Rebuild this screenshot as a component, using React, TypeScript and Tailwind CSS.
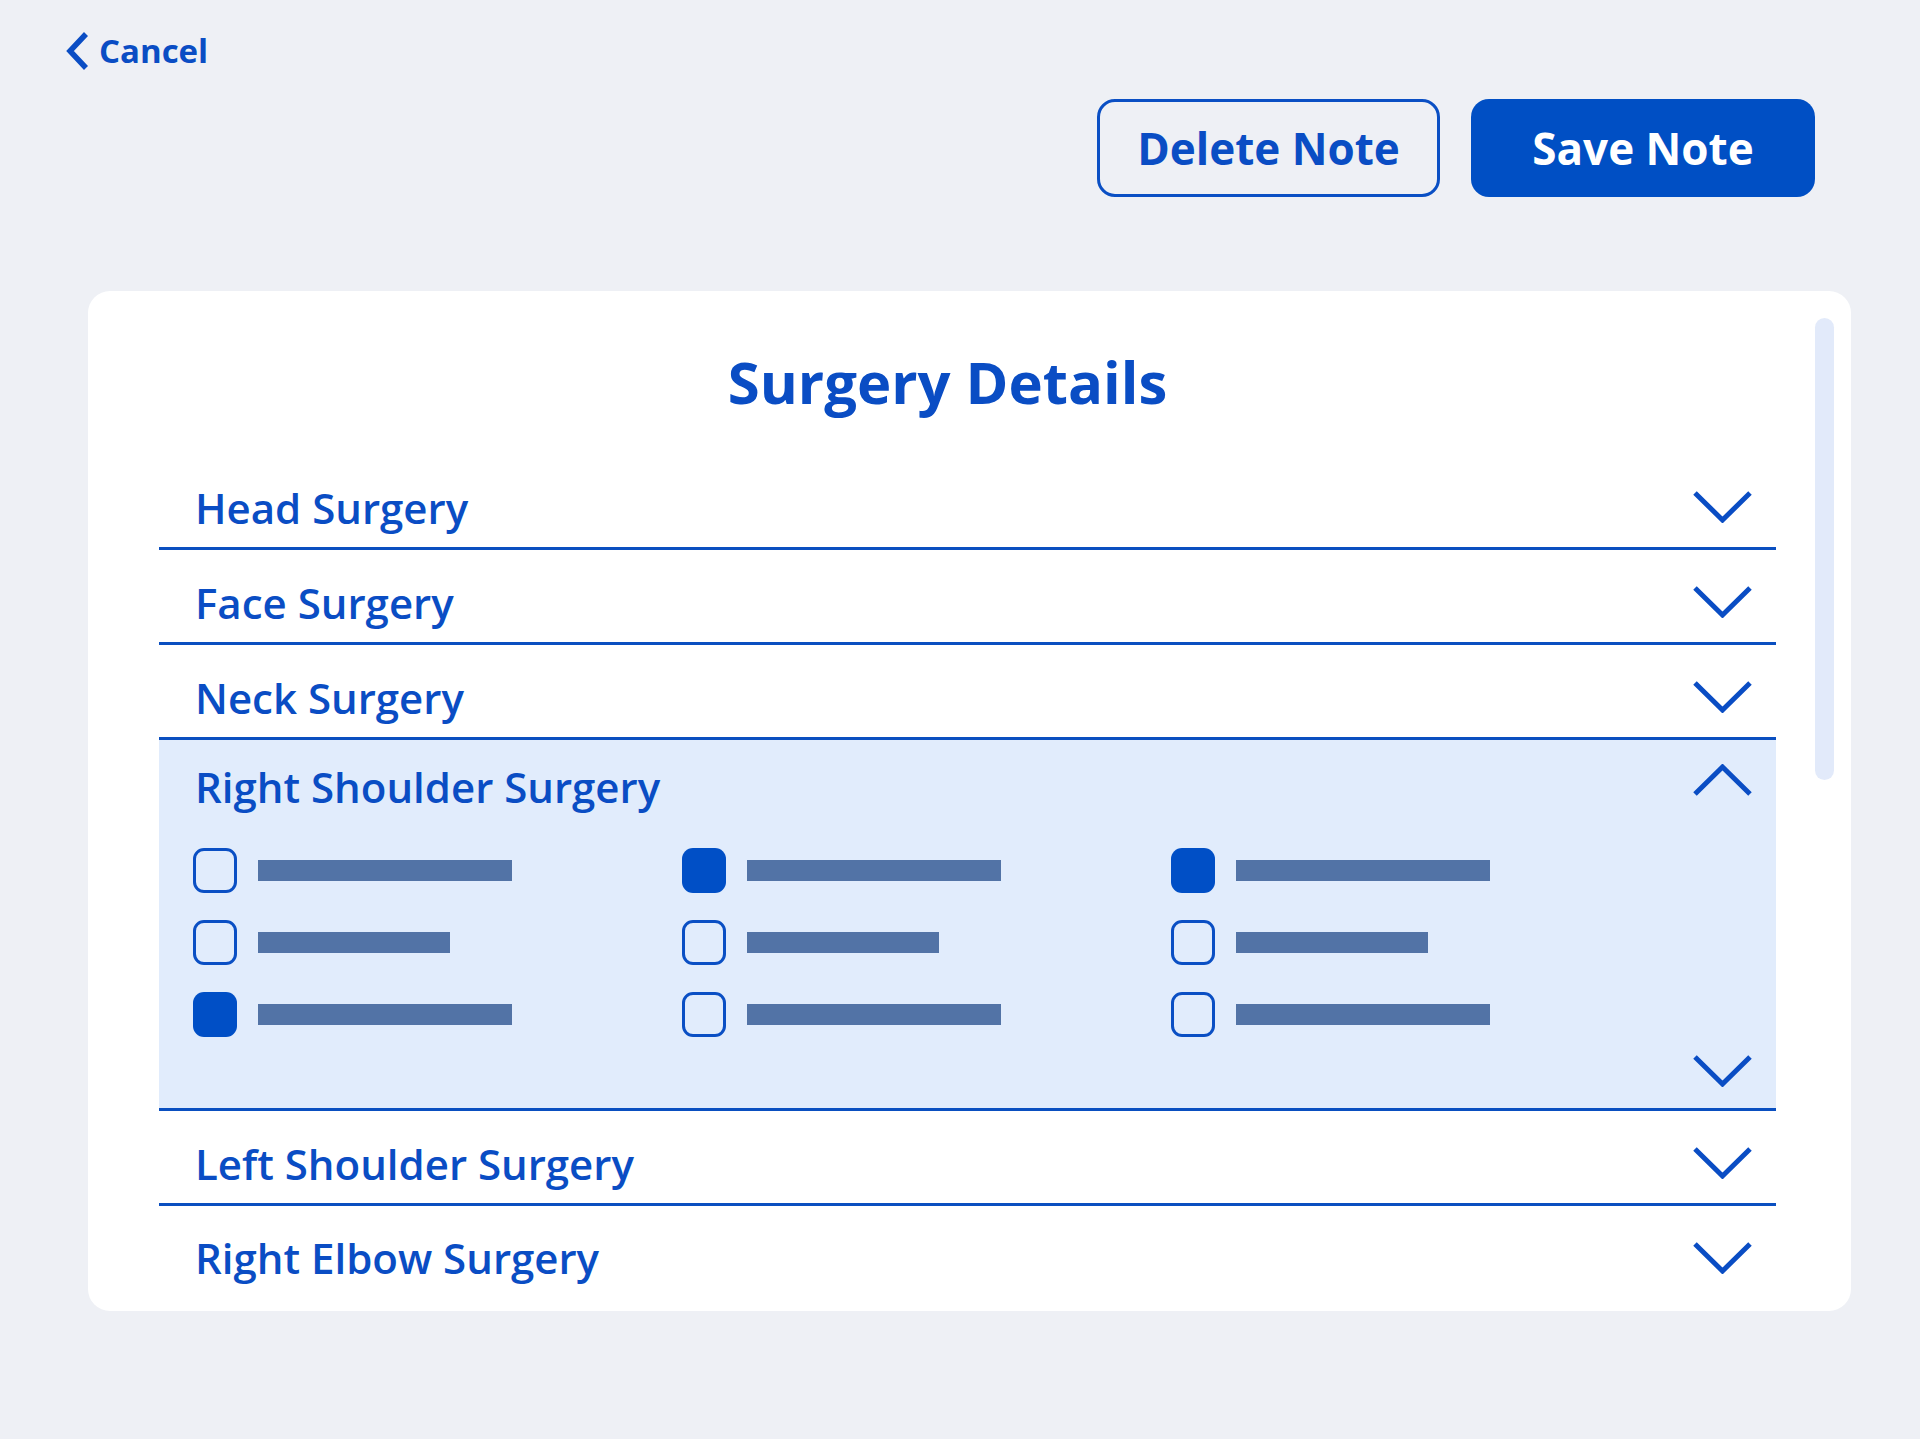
import React from "react";

const sections = ["Head Surgery", "Face Surgery", "Neck Surgery"];
const after = ["Left Shoulder Surgery", "Right Elbow Surgery"];

// [checked, long bar]
const options: [boolean, boolean][][] = [
  [
    [false, true],
    [false, false],
    [true, true],
  ],
  [
    [true, true],
    [false, false],
    [false, true],
  ],
  [
    [true, true],
    [false, false],
    [false, true],
  ],
];

function Chevron({ up = false }: { up?: boolean }) {
  return (
    <svg width="61" height="32" viewBox="0 0 61 32" fill="none" className="shrink-0">
      <polyline
        points={up ? "3,30 30.5,3 58,30" : "3,2 30.5,29 58,2"}
        stroke="#0a4dc4"
        strokeWidth="5"
        strokeLinecap="butt"
        strokeLinejoin="miter"
      />
    </svg>
  );
}

function Row({ label }: { label: string }) {
  return (
    <div className="flex h-[95px] items-center justify-between border-b-[3px] border-[#0a4fc0] pl-[36px] pr-[23px] pt-[12px]">
      <span className="text-[42px] font-semibold text-[#0a4dc4]">{label}</span>
      <Chevron />
    </div>
  );
}

function Checkbox({ checked }: { checked: boolean }) {
  return checked ? (
    <div className="h-[45px] w-[44px] shrink-0 rounded-[11px] bg-[#004fc6]" />
  ) : (
    <div className="h-[45px] w-[44px] shrink-0 rounded-[11px] border-[3px] border-[#0a4fc4]" />
  );
}

export default function App() {
  return (
    <div className="min-h-screen bg-[#eef0f5] pb-[128px] font-['Open_Sans',sans-serif]">
      <div className="flex items-center gap-[10px] pl-[66px] pt-[32px] text-[#0a4dc4]">
        <svg width="23" height="38" viewBox="0 0 23 38" fill="none">
          <polyline points="20,2 4,19 20,36" stroke="#0a4dc4" strokeWidth="5.5" />
        </svg>
        <span className="text-[33px] font-bold leading-[38px]">Cancel</span>
      </div>

      <div className="mt-[29px] flex justify-end gap-[31px] pr-[105px]">
        <button className="flex h-[98px] w-[343px] items-center justify-center rounded-[18px] border-[3px] border-[#0a4fc4] text-[44px] font-bold text-[#0a4dc4]">
          Delete Note
        </button>
        <button className="flex h-[98px] w-[344px] items-center justify-center rounded-[18px] bg-[#004fc4] text-[44px] font-bold text-white">
          Save Note
        </button>
      </div>

      <div className="ml-[88px] mr-[69px] mt-[94px] flex h-[1020px] rounded-[22px] bg-white pl-[71px] pr-[17px]">
        <div className="flex-1">
          <h1 className="pr-[40px] pt-[56px] text-center text-[58px] font-bold leading-[70px] text-[#0a4dc4]">
            Surgery Details
          </h1>
          <div className="mt-[38px]">
            {sections.map((s) => (
              <Row key={s} label={s} />
            ))}

            <div className="border-b-[3px] border-[#0a4fc0] bg-[#e1ecfc]">
              <div className="flex h-[92px] items-center justify-between pl-[36px] pr-[23px]">
                <span className="text-[42px] font-semibold text-[#0a4dc4]">Right Shoulder Surgery</span>
                <div className="-mt-[12px]">
                  <Chevron up />
                </div>
              </div>
              <div className="mt-[16px] flex pl-[34px]">
                {options.map((col, ci) => (
                  <div key={ci} className="flex w-[489px] flex-col gap-[27px]">
                    {col.map(([checked, long], ri) => (
                      <div key={ri} className="flex items-center gap-[21px]">
                        <Checkbox checked={checked} />
                        <div
                          className={
                            long
                              ? "h-[21px] w-[254px] bg-[#5273a6]"
                              : "h-[21px] w-[192px] bg-[#5273a6]"
                          }
                        />
                      </div>
                    ))}
                  </div>
                ))}
              </div>
              <div className="flex justify-end pb-[21px] pr-[23px] pt-[18px]">
                <Chevron />
              </div>
            </div>

            {after.map((s, i) =>
              i === after.length - 1 ? (
                <div
                  key={s}
                  className="flex h-[95px] items-center justify-between pl-[36px] pr-[23px] pt-[8px]"
                >
                  <span className="text-[42px] font-semibold text-[#0a4dc4]">{s}</span>
                  <Chevron />
                </div>
              ) : (
                <Row key={s} label={s} />
              )
            )}
          </div>
        </div>
        <div className="ml-[39px] mt-[27px] h-[462px] w-[19px] rounded-full bg-[#e2eafa]" />
      </div>
    </div>
  );
}
